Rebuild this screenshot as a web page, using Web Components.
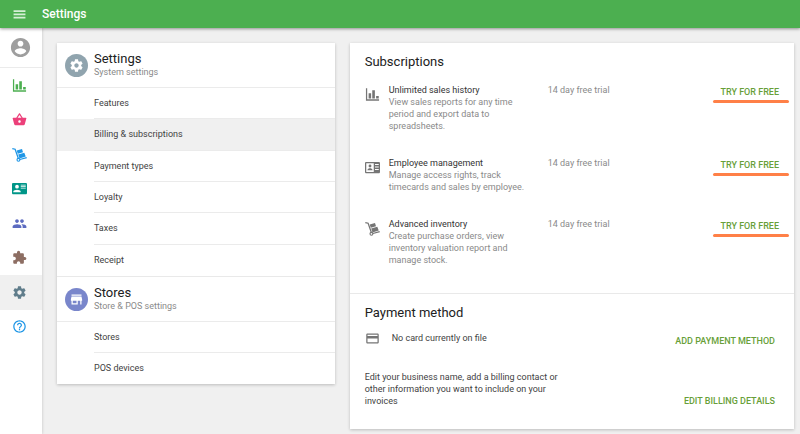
<!DOCTYPE html>
<html lang="en">
<head>
<meta charset="utf-8">
<meta name="viewport" content="width=device-width, initial-scale=1">
<title>Settings</title>
<style>
html, body { margin: 0; min-height: 100%; }
body { background: #f0f0f0; font: 9px/12px Roboto, "Liberation Sans", sans-serif; color: #424242; }
</style>
</head>
<body>
<settings-app></settings-app>
<script>
const ICONS = {
  menu: '<path d="M2.500 18.500h19v-3h-19v3zm0-5.500h19v-2.500h-19V13zm0-8v3h19V5h-19z"/>',
  user: '<path d="M12 2C6.480 2 2 6.480 2 12s4.480 10 10 10 10-4.480 10-10S17.520 2 12 2zm0 3c1.660 0 3 1.340 3 3s-1.340 3-3 3-3-1.340-3-3 1.340-3 3-3zm0 14.200c-2.500 0-4.710-1.280-6-3.220.030-1.990 4-3.080 6-3.080 1.990 0 5.970 1.090 6 3.080-1.290 1.940-3.500 3.220-6 3.220z"/>',
  chart: '<path d="M1.500 2h2v17.500h19v2.500h-21zM5.800 10h4v8.500h-4zM11.600 5h4.200v13.500h-4.200zM17.800 14.500H22v4h-4.200z"/>',
  basket: '<path d="M17.210 9l-4.380-6.560c-.190-.280-.510-.420-.830-.420-.320 0-.640.140-.830.430L6.790 9H2c-.550 0-1 .450-1 1 0 .090.010.180.040.270l2.540 9.270c.230.840 1 1.460 1.920 1.460h13c.920 0 1.690-.620 1.930-1.460l2.540-9.270L23 10c0-.550-.450-1-1-1h-4.790zM9 9l3-4.400L15 9H9zm3 8c-1.100 0-2-.900-2-2s.900-2 2-2 2 .900 2 2-.900 2-2 2z"/>',
  dolly: '<path d="M.5 2.500l4.500 1 5 14.500" fill="none" stroke="currentColor" stroke-width="2"/><path d="M12.500 20l11-3" fill="none" stroke="currentColor" stroke-width="2"/><circle cx="10.300" cy="20.500" r="2.300" fill="none" stroke="currentColor" stroke-width="1.800"/><path d="M7.600 5.500l8.400-2.300 1.600 5-8.400 2.600zM9.900 12l9.800-3 2.200 6.300-9.900 3z"/>',
  contact: '<path fill-rule="evenodd" d="M2 3h20c1.100 0 2 .900 2 2v14c0 1.100-.900 2-2 2H2c-1.100 0-2-.900-2-2V5c0-1.100.900-2 2-2zM8 6a3 3 0 1 0 0 6 3 3 0 0 0 0-6zM2 18h12v-1c0-2-4-3.100-6-3.100S2 15 2 17zM14 6h8v1.300h-8zM14 8.400h8v1.300h-8zM14 10.800h8V12h-8z"/>',
  badge: '<path fill-rule="evenodd" d="M2 3h20c1.100 0 2 .900 2 2v14c0 1.100-.900 2-2 2H2c-1.100 0-2-.900-2-2V5c0-1.100.900-2 2-2zM2 5v14h12V5zM16 6.500h6V8h-6zM16 10.500h6V12h-6zM16 14.500h6V16h-6z"/><circle cx="8" cy="9.500" r="2.300"/><path d="M3.800 16.500c0-2.300 2.700-3.300 4.200-3.300s4.200 1 4.200 3.300z"/>',
  people: '<path d="M16 11c1.660 0 2.990-1.340 2.990-3S17.660 5 16 5s-3 1.340-3 3 1.340 3 3 3zm-8 0c1.660 0 2.990-1.340 2.990-3S9.660 5 8 5 5 6.340 5 8s1.340 3 3 3zm0 2c-2.330 0-7 1.170-7 3.500V19h14v-2.500c0-2.330-4.670-3.500-7-3.500zm8 0c-.290 0-.620.020-.970.050 1.160.840 1.970 1.970 1.970 3.450V19h6v-2.500c0-2.330-4.670-3.500-7-3.500z"/>',
  puzzle: '<path d="M20.500 11H19V7c0-1.100-.900-2-2-2h-4V3.500a2.500 2.500 0 0 0-5 0V5H4c-1.100 0-2 .900-2 2v3.800h1.500a2.700 2.700 0 0 1 0 5.400H2V20c0 1.100.900 2 2 2h3.800v-1.500a2.700 2.700 0 0 1 5.400 0V22H17c1.100 0 2-.900 2-2v-4h1.500a2.500 2.500 0 0 0 0-5z"/>',
  gear: '<path d="M19.430 12.980c.040-.320.070-.640.070-.980s-.030-.660-.070-.980l2.110-1.650c.190-.150.240-.420.120-.640l-2-3.460c-.120-.220-.390-.300-.610-.220l-2.490 1c-.520-.400-1.080-.730-1.690-.980l-.380-2.650A.488.488 0 0 0 14 2h-4c-.250 0-.460.180-.490.420l-.380 2.650c-.610.250-1.170.590-1.690.980l-2.490-1c-.230-.090-.490 0-.610.220l-2 3.460c-.130.220-.070.490.120.640l2.110 1.650c-.040.320-.070.650-.070.980s.030.660.070.980l-2.110 1.650c-.190.150-.240.420-.120.640l2 3.460c.120.220.390.300.610.220l2.490-1c.520.400 1.080.730 1.690.980l.380 2.650c.030.240.240.420.490.420h4c.250 0 .460-.180.490-.420l.380-2.650c.610-.250 1.170-.590 1.690-.980l2.490 1c.230.090.490 0 .610-.220l2-3.460c.120-.220.070-.490-.120-.640l-2.110-1.650zM12 15.500c-1.930 0-3.500-1.570-3.500-3.500s1.570-3.500 3.500-3.500 3.500 1.570 3.500 3.500-1.570 3.500-3.500 3.500z"/>',
  help: '<path d="M11 18h2v-2h-2v2zm1-16C6.480 2 2 6.480 2 12s4.480 10 10 10 10-4.480 10-10S17.520 2 12 2zm0 18c-4.410 0-8-3.590-8-8s3.590-8 8-8 8 3.590 8 8-3.590 8-8 8zm0-14c-2.210 0-4 1.790-4 4h2c0-1.100.900-2 2-2s2 .900 2 2c0 2-3 1.750-3 5h2c0-2.250 3-2.500 3-5 0-2.210-1.790-4-4-4z"/>',
  store: '<path d="M20 4H4v2h16V4zm1 10v-2l-1-5H4l-1 5v2h1v6h10v-6h4v6h2v-6h1zm-9 4H6v-4h6v4z"/>',
  card: '<path d="M20 4H4c-1.110 0-1.990.890-1.990 2L2 18c0 1.110.890 2 2 2h16c1.110 0 2-.890 2-2V6c0-1.110-.890-2-2-2zm0 14H4v-6h16v6zm0-10H4V6h16v2z"/>'
};

const define = (name, html) => {
  const template = document.createElement('template');
  template.innerHTML = html;
  customElements.define(name, class extends HTMLElement {
    constructor() {
      super();
      this.attachShadow({ mode: 'open' }).append(template.content.cloneNode(true));
    }
  });
};

customElements.define('app-icon', class extends HTMLElement {
  connectedCallback() {
    if (this.shadowRoot) return;
    this.attachShadow({ mode: 'open' }).innerHTML = `
      <style>
        :host { display: block; flex: none; width: var(--icon-size, 15px); height: var(--icon-size, 15px); }
        svg { display: block; width: 100%; height: 100%; fill: currentColor; }
      </style>
      <svg viewBox="0 0 24 24" aria-hidden="true">${ICONS[this.getAttribute('name')]}</svg>`;
  }
});

define('app-bar', `
  <style>
    :host { display: flex; align-items: center; gap: 15px; height: 28px; padding: 0 12px; box-sizing: border-box;
      background: #4caf50; color: #fff; box-shadow: 0 1px 3px rgba(0,0,0,.4); position: relative; z-index: 2; }
    button { border: 0; padding: 0; background: none; color: #d5efd6; }
    h1 { margin: 0; font-size: 12px; line-height: 16px; font-weight: 500; }
  </style>
  <button type="button" aria-label="Menu"><app-icon name="menu"></app-icon></button>
  <h1><slot></slot></h1>`);

customElements.define('rail-link', class extends HTMLElement {
  connectedCallback() {
    if (this.shadowRoot) return;
    this.attachShadow({ mode: 'open' }).innerHTML = `
      <style>
        :host { display: grid; }
        :host([active]) { background: #f0f0f0; }
        a { display: grid; place-items: center; padding-right: 3px; color: inherit; }
      </style>
      <a href="#" aria-label="${this.getAttribute('label')}"><app-icon name="${this.getAttribute('icon')}"></app-icon></a>`;
  }
});

define('side-rail', `
  <style>
    :host { display: block; background: #fff; box-shadow: 0 0 3px rgba(0,0,0,.2); }
    .user { display: grid; place-items: center; height: 39px; padding-right: 2px; border-bottom: 1px solid #ebebeb; color: #9e9e9e; --icon-size: 23px; }
    nav { display: grid; grid-auto-rows: 1fr; height: 276px; }
  </style>
  <a class="user" href="#" aria-label="Account"><app-icon name="user"></app-icon></a>
  <nav aria-label="Main">
    <rail-link icon="chart" label="Reports" style="color:#4caf50"></rail-link>
    <rail-link icon="basket" label="Items" style="color:#ec407a"></rail-link>
    <rail-link icon="dolly" label="Inventory management" style="color:#1e96e6"></rail-link>
    <rail-link icon="contact" label="Employees" style="color:#009688"></rail-link>
    <rail-link icon="people" label="Customers" style="color:#5c6bc0"></rail-link>
    <rail-link icon="puzzle" label="Integrations" style="color:#8d6e63"></rail-link>
    <rail-link icon="gear" label="Settings" style="color:#607d8b" active></rail-link>
    <rail-link icon="help" label="Help" style="color:#1e96e6"></rail-link>
  </nav>`);

define('paper-card', `
  <style>
    :host { display: block; background: #fff; box-shadow: 0 1px 3px rgba(0,0,0,.22); }
  </style>
  <slot></slot>`);

customElements.define('menu-group', class extends HTMLElement {
  connectedCallback() {
    if (this.shadowRoot) return;
    this.attachShadow({ mode: 'open' }).innerHTML = `
      <style>
        :host { display: block; }
        :host(:not(:first-child)) { border-top: 1px solid #e9e9e9; }
        header { display: flex; align-items: center; gap: 6px; height: 44px; padding: 0 8px; border-bottom: 1px solid #ebebeb; }
        .disc { display: grid; place-items: center; width: 23px; height: 23px; border-radius: 50%; background: var(--disc); color: #fff; }
        h2 { margin: 0; font-size: 13px; line-height: 14px; font-weight: 400; color: #212121; }
        p { margin: 0; color: #8a8a8a; }
        nav { display: grid; grid-auto-rows: 1fr; min-height: var(--list-height); }
      </style>
      <header><span class="disc"><app-icon name="${this.getAttribute('icon')}"></app-icon></span>
        <div><h2>${this.getAttribute('heading')}</h2><p>${this.getAttribute('note')}</p></div></header>
      <nav><slot></slot></nav>`;
  }
});

define('menu-link', `
  <style>
    :host { display: grid; padding-left: 37px; }
    :host([active]) { background: #f0f0f0; }
    a { display: flex; align-items: center; color: inherit; text-decoration: none; border-bottom: 1px solid #ebebeb; }
    :host(:last-child) a { border-color: transparent; }
  </style>
  <a href="#"><slot></slot></a>`);

define('text-button', `
  <style>
    :host { display: block; position: relative; }
    button { display: block; border: 0; margin: 0; padding: 0; background: none; font: 500 9px/12px Roboto, "Liberation Sans", sans-serif; color: #689f38; white-space: nowrap; }
    :host([marked])::after { content: ""; position: absolute; left: -7px; right: -10px; top: 14px; height: 3px; border-radius: 2px; background: #ff8047; }
  </style>
  <button type="button"><slot></slot></button>`);

customElements.define('plan-row', class extends HTMLElement {
  connectedCallback() {
    if (this.shadowRoot) return;
    this.attachShadow({ mode: 'open' }).innerHTML = `
      <style>
        :host { display: grid; grid-template-columns: 15px minmax(0, 149px) 1fr auto; align-items: start; }
        app-icon { margin-top: 3px; color: #757575; }
        .text { padding-left: 9px; }
        h3 { margin: 0; font: inherit; color: #333; }
        p { margin: 0; color: #8a8a8a; }
        .trial { padding-left: 19px; }
        text-button { margin-top: 2px; }
      </style>
      <app-icon name="${this.getAttribute('icon')}"></app-icon>
      <div class="text"><h3>${this.getAttribute('heading')}</h3><p><slot></slot></p></div>
      <p class="trial">14 day free trial</p>
      <text-button marked>TRY FOR FREE</text-button>`;
  }
});

define('billing-panel', `
  <style>
    :host { display: block; }
    h2 { margin: 0; font-size: 13px; line-height: 16px; font-weight: 400; color: #212121; }
    .plans { padding: 11px 15px 27px; border-bottom: 1px solid #e9e9e9; }
    .rows { display: grid; gap: 25px; padding-top: 14px; }
    .payment { padding: 11px 19px 22px 15px; }
    .line { display: flex; align-items: center; gap: 12px; padding-top: 8px; }
    .line app-icon { color: #757575; }
    .line p { flex: 1; }
    .line text-button { padding-top: 6px; }
    .details { display: flex; align-items: end; justify-content: space-between; padding-top: 24px; }
    p { margin: 0; }
    .details p { width: 200px; }
  </style>
  <paper-card>
    <section class="plans">
      <h2>Subscriptions</h2>
      <div class="rows">
        <plan-row icon="chart" heading="Unlimited sales history">View sales reports for any time period and export data to spreadsheets.</plan-row>
        <plan-row icon="badge" heading="Employee management">Manage access rights, track timecards and sales by employee.</plan-row>
        <plan-row icon="dolly" heading="Advanced inventory">Create purchase orders, view inventory valuation report and manage stock.</plan-row>
      </div>
    </section>
    <section class="payment">
      <h2>Payment method</h2>
      <div class="line"><app-icon name="card"></app-icon><p>No card currently on file</p><text-button>ADD PAYMENT METHOD</text-button></div>
      <div class="details"><p>Edit your business name, add a billing contact or other information you want to include on your invoices</p><text-button>EDIT BILLING DETAILS</text-button></div>
    </section>
  </paper-card>`);

define('settings-app', `
  <style>
    :host { display: flex; flex-direction: column; min-height: 100vh; }
    .body { flex: 1; display: grid; grid-template-columns: 42px 1fr; }
    main { display: grid; grid-template-columns: 5fr 8fr; gap: 15px; align-items: start; padding: 15px 6px 5px 15px; }
  </style>
  <app-bar>Settings</app-bar>
  <div class="body">
    <side-rail></side-rail>
    <main>
      <paper-card>
        <menu-group icon="gear" heading="Settings" note="System settings" style="--disc:#90a4ae;--list-height:188px">
          <menu-link>Features</menu-link>
          <menu-link active>Billing &amp; subscriptions</menu-link>
          <menu-link>Payment types</menu-link>
          <menu-link>Loyalty</menu-link>
          <menu-link>Taxes</menu-link>
          <menu-link>Receipt</menu-link>
        </menu-group>
        <menu-group icon="store" heading="Stores" note="Store &amp; POS settings" style="--disc:#7986cb;--list-height:62px">
          <menu-link>Stores</menu-link>
          <menu-link>POS devices</menu-link>
        </menu-group>
      </paper-card>
      <billing-panel></billing-panel>
    </main>
  </div>`);
</script>
</body>
</html>
